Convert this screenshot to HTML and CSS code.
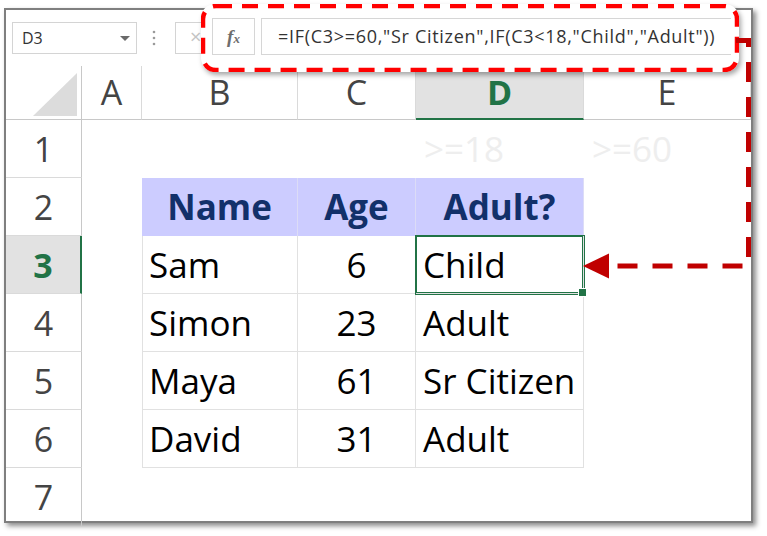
FILE: index.html
```html
<!DOCTYPE html>
<html>
<head>
<meta charset="utf-8">
<link rel="stylesheet" href="styles.css">
</head>
<body>
<div class="frame">
  <div class="fbar">
    <div class="namebox"><span>D3</span><i class="caret"></i></div>
    <svg class="dots" width="4" height="16" viewBox="0 0 4 16"><circle cx="2" cy="2" r="1.3" fill="#9a9a9a"/><circle cx="2" cy="8" r="1.3" fill="#9a9a9a"/><circle cx="2" cy="14" r="1.3" fill="#9a9a9a"/></svg>
    <div class="xbox">×</div>
    <div class="callout">
      <svg class="dash" width="538" height="68" viewBox="0 0 538 68"><rect x="2" y="2" width="534" height="64" rx="13" ry="13" fill="none" stroke="#ff0000" stroke-width="4.5" stroke-dasharray="16 10"/></svg>
      <div class="fxbox"><span class="f">f</span><span class="x">x</span></div>
      <div class="formula">=IF(C3&gt;=60,"Sr Citizen",IF(C3&lt;18,"Child","Adult"))</div>
    </div>
  </div>
  <div class="sheet">
    <div class="corner"><i class="tri"></i></div>
    <div class="ch">A</div>
    <div class="ch">B</div>
    <div class="ch">C</div>
    <div class="ch sel">D</div>
    <div class="ch">E</div>

    <div class="rh">1</div>
    <div class="c"></div>
    <div class="c"></div>
    <div class="c"></div>
    <div class="c faint">&gt;=18</div>
    <div class="c faint">&gt;=60</div>

    <div class="rh">2</div>
    <div class="c"></div>
    <div class="c th">Name</div>
    <div class="c th">Age</div>
    <div class="c th">Adult?</div>
    <div class="c"></div>

    <div class="rh sel">3</div>
    <div class="c"></div>
    <div class="c t first">Sam</div>
    <div class="c t num">6</div>
    <div class="c t active">Child</div>
    <div class="c"></div>

    <div class="rh">4</div>
    <div class="c"></div>
    <div class="c t first">Simon</div>
    <div class="c t num">23</div>
    <div class="c t">Adult</div>
    <div class="c"></div>

    <div class="rh">5</div>
    <div class="c"></div>
    <div class="c t first">Maya</div>
    <div class="c t num">61</div>
    <div class="c t">Sr Citizen</div>
    <div class="c"></div>

    <div class="rh">6</div>
    <div class="c"></div>
    <div class="c t first">David</div>
    <div class="c t num">31</div>
    <div class="c t">Adult</div>
    <div class="c"></div>

    <div class="rh last">7</div>
    <div class="c"></div>
    <div class="c"></div>
    <div class="c"></div>
    <div class="c"></div>
    <div class="c"></div>
  </div>
</div>
<svg class="connector" width="767" height="536" viewBox="0 0 767 536">
  <path d="M736 40.5 H748.5 V266 H610" fill="none" stroke="#c00000" stroke-width="5" stroke-dasharray="20 15" stroke-dashoffset="1"/>
  <polygon points="583,266 609,253.5 609,278.5" fill="#c00000"/>
</svg>
</body>
</html>
```
FILE: styles.css
```css
* { box-sizing: border-box; }
html, body { margin: 0; padding: 0; background: #ffffff; }
body {
  width: 767px;
  height: 536px;
  position: relative;
  overflow: hidden;
  font-family: "Open Sans", "Noto Sans", sans-serif;
}
.frame {
  margin: 8px 0 0 4px;
  width: 749px;
  height: 515px;
  border: 2px solid #7f7f7f;
  background: #ffffff;
  box-shadow: 3px 3px 5px rgba(0, 0, 0, 0.45);
  display: flex;
  flex-direction: column;
}
.fbar {
  height: 56px;
  flex: none;
  display: flex;
  align-items: center;
  padding-left: 6px;
}
.namebox {
  width: 125px;
  height: 32px;
  border: 1px solid #d4d4d4;
  display: flex;
  align-items: center;
  justify-content: space-between;
  padding: 0 6px 0 9px;
  font-size: 16px;
  color: #333333;
}
.caret {
  width: 0;
  height: 0;
  border-left: 5px solid transparent;
  border-right: 5px solid transparent;
  border-top: 5px solid #6a6a6a;
}
.dots { margin-left: 15px; }
.xbox {
  margin-left: 19px;
  width: 40px;
  height: 32px;
  border: 1px solid #d4d4d4;
  color: #c4c4c4;
  font-size: 20px;
  line-height: 28px;
  padding-left: 14px;
}
.callout {
  position: relative;
  z-index: 2;
  margin-left: -14px;
  width: 538px;
  height: 68px;
  border-radius: 14px;
  background: #ffffff;
  box-shadow: 2px 3px 5px rgba(0, 0, 0, 0.35);
  display: flex;
  align-items: flex-start;
  padding: 14px 8px 0 11px;
}
.dash {
  position: absolute;
  left: 0;
  top: 0;
}
.fxbox {
  width: 43px;
  height: 37px;
  border: 1px solid #d6d6d6;
  display: flex;
  align-items: center;
  justify-content: center;
  font-family: "Liberation Serif", serif;
  font-style: italic;
  font-weight: bold;
  color: #6e6e6e;
}
.fxbox .f { font-size: 19px; }
.fxbox .x { font-size: 13px; margin-top: 5px; }
.formula {
  margin-left: 6px;
  flex: 1;
  height: 37px;
  border: 1px solid #d6d6d6;
  border-right: none;
  font-size: 18px;
  letter-spacing: 0.7px;
  line-height: 35px;
  color: #333333;
  padding-left: 16px;
  white-space: nowrap;
  overflow: hidden;
}
.sheet {
  flex: 1;
  display: grid;
  grid-template-columns: 76px 60px 156px 118px 168px 1fr;
  grid-template-rows: 54px repeat(6, 58px) 1fr;
  font-size: 34px;
}
.corner {
  border-right: 1px solid #c8c8c8;
  border-bottom: 1px solid #c8c8c8;
  display: flex;
  align-items: flex-end;
  justify-content: flex-end;
  padding: 0 4px 3px 0;
}
.tri {
  width: 44px;
  height: 43px;
  background: #dcdcdc;
  clip-path: polygon(100% 0, 100% 100%, 0 100%);
}
.ch {
  border-right: 1px solid #dadada;
  border-bottom: 1px solid #c8c8c8;
  text-align: center;
  line-height: 53px;
  color: #444444;
}
.ch.sel {
  background: #e2e2e2;
  border-bottom: 2px solid #217346;
  color: #217346;
  font-weight: bold;
}
.rh {
  border-right: 1px solid #c8c8c8;
  border-bottom: 1px solid #dadada;
  text-align: center;
  line-height: 58px;
  color: #444444;
}
.rh.last { border-bottom: none; }
.rh.sel {
  background: #e2e2e2;
  border-right: 2px solid #217346;
  color: #217346;
  font-weight: bold;
}
.c {
  line-height: 58px;
  padding-left: 8px;
  color: #000000;
  white-space: nowrap;
  font-size: 35px;
}
.faint { color: #eeeeee; }
.th {
  background: #ccccff;
  border-right: 1px solid #dcdcf6;
  color: #12306a;
  font-weight: bold;
  text-align: center;
  padding-left: 0;
}
.t {
  border-right: 1px solid #e1e1e1;
  border-bottom: 1px solid #e1e1e1;
  padding-left: 7px;
}
.t.first { border-left: 1px solid #e1e1e1; padding-left: 6px; }
.t.num { text-align: center; padding-left: 0; }
.active {
  position: relative;
  z-index: 1;
  box-shadow: 0 0 0 1px #217346, inset 0 0 0 1px #217346;
}
.active::after {
  content: "";
  position: absolute;
  right: -4px;
  bottom: -4px;
  width: 7px;
  height: 7px;
  background: #217346;
  border: 1px solid #ffffff;
}
.connector {
  position: absolute;
  left: 0;
  top: 0;
  pointer-events: none;
  z-index: 5;
}
```
